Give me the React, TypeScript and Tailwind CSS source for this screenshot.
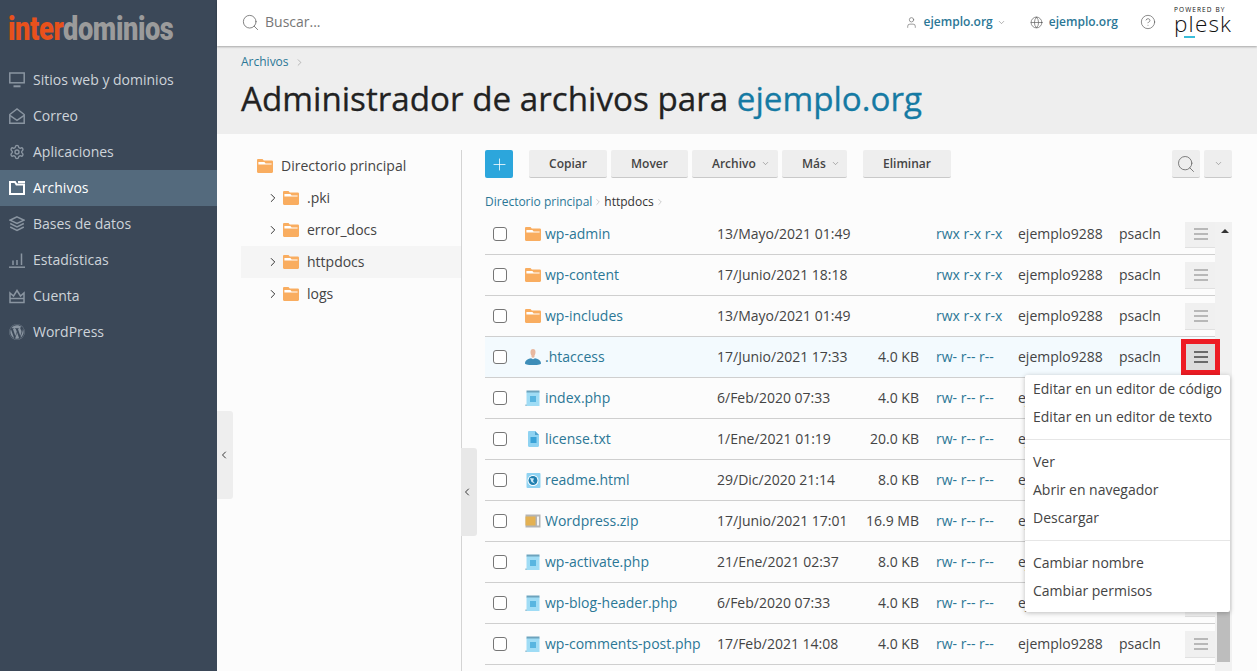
import React from "react";
import { Settings, ChevronRight, ChevronLeft, ChevronDown, Search, User, Globe, CircleHelp, Plus } from "lucide-react";
import { FaWordpress } from "react-icons/fa";

const FolderIcon = ({ className = "" }: { className?: string }) => (
  <svg viewBox="0 0 16 14" className={className}>
    <path d="M0 1.2C0 .5.5 0 1.2 0h4.3l1.3 1.4h8C15.5 1.4 16 2 16 2.6v10.2c0 .7-.5 1.2-1.2 1.2H1.2C.5 14 0 13.5 0 12.8z" fill="#f9ad60" />
    <path d="M1.4 3h6l1.2 1.4h6V5.4H1.4z" fill="#ffffff" />
  </svg>
);

const PhpIcon = () => (
  <svg viewBox="0 0 16 16" className="w-4 h-4 shrink-0">
    <rect x="1.5" y="2" width="13" height="14" fill="#9fdcf5" />
    <rect x="1.5" y="0.5" width="13" height="2" fill="#6da3bd" />
    <rect x="5" y="6" width="6" height="6" fill="#58b5e0" />
    <rect x="0.5" y="14.5" width="1" height="1.5" fill="#6da3bd" />
  </svg>
);
const TxtIcon = () => (
  <svg viewBox="0 0 16 16" className="w-4 h-4 shrink-0">
    <path d="M3 1.2C3 .5 3.5 0 4.2 0H10l4 4v10.8c0 .7-.5 1.2-1.2 1.2H4.2C3.5 16 3 15.500 3 14.800z" fill="#8fd3f2" />
    <path d="M10 0l4 4h-4z" fill="#4fa3cf" />
    <rect x="5.500" y="6" width="6" height="6" fill="#3aa3d8" />
  </svg>
);
const HtmlIcon = () => (
  <svg viewBox="0 0 16 16" className="w-4 h-4 shrink-0">
    <rect x="1.500" y="1" width="14" height="15" rx="1" fill="#8fd3f2" />
    <circle cx="8" cy="8.500" r="5.500" fill="#fff" />
    <circle cx="8" cy="8.500" r="4.500" fill="#1f7fb0" />
    <path d="M5 6l4 .5-1 2.500 2 2.500-3.500-1.500z" fill="#cfeaf7" />
  </svg>
);
const ZipIcon = () => (
  <svg viewBox="0 0 16 16" className="w-4 h-4 shrink-0">
    <rect x="0.500" y="1.500" width="15" height="13" fill="#b5b5b5" />
    <rect x="0.500" y="3.500" width="10" height="9" fill="#e4b152" />
    <rect x="12" y="3.500" width="2" height="9" fill="#f4f4f4" />
  </svg>
);
const UserFileIcon = () => (
  <svg viewBox="0 0 16 16" className="w-4 h-4 shrink-0">
    <path d="M5.500 3a2.500 3 0 0 1 5 0c0 1.700-.6 3-1 3.600V8l-1.500 1-1.500-1V6.600C6 6 5.500 4.700 5.500 3z" fill="#e8b8a0" />
    <path d="M0 14.500C0 11 3.500 9.800 6 9.300l2 .9 2-.9c2.500.5 6 1.700 6 5.200 0 .9-2 1.500-8 1.500s-8-.6-8-1.500z" fill="#3d8db8" />
  </svg>
);

const NavSvg = ({ children }: { children: React.ReactNode }) => (
  <svg viewBox="0 0 16 16" className="w-4 h-4" fill="none" stroke="#8a95a1" strokeWidth="1.500">
    {children}
  </svg>
);
const ArchivosIcon = () => (
  <svg viewBox="0 0 16 14" className="w-4 h-[14px]" fill="none" stroke="#fff" strokeWidth="2">
    <path d="M1 1h5l1.500 2.500H15V13H1z" />
    <path d="M9 1h7" />
  </svg>
);

const nav: [string, React.ReactNode][] = [
  ["Sitios web y dominios", <NavSvg><rect x="0.800" y="1" width="14.400" height="9.800" /><path d="M4.500 14.300h7" strokeWidth="2" /></NavSvg>],
  ["Correo", <NavSvg><path d="M.8 6.500L8 1l7.200 5.500v8.700H.8z" /><path d="M.8 7.300L8 12.300l7.200-5" /></NavSvg>],
  ["Aplicaciones", <Settings size={16} strokeWidth={2.1} color="#8a95a1" />],
  ["Archivos", <ArchivosIcon />],
  ["Bases de datos", <NavSvg><path d="M8 .9l7 3.300-7 3.300-7-3.300z" /><path d="M1.200 7.500L8 10.800l6.800-3.300" /><path d="M1.200 11L8 14.500l6.800-3.500" /></NavSvg>],
  ["Estadísticas", <NavSvg><path d="M0 15.200h16" /><path d="M4 13V8.500M8 13V8M12.500 13V1.500" /></NavSvg>],
  ["Cuenta", <NavSvg><path d="M1 5l3.500 3L8 2.500 11.500 8 15 5v9.500H1z" /><path d="M1 10.500h14" /></NavSvg>],
  ["WordPress", <FaWordpress size={16} color="#8a95a1" />],
];

type Row = { n: string; d: string; s: string; p: string; i: React.ReactNode };
const folder = <FolderIcon className="w-4 h-[14px] shrink-0" />;
const rows: Row[] = [
  { n: "wp-admin", d: "13/Mayo/2021 01:49", s: "", p: "rwx r-x r-x", i: folder },
  { n: "wp-content", d: "17/Junio/2021 18:18", s: "", p: "rwx r-x r-x", i: folder },
  { n: "wp-includes", d: "13/Mayo/2021 01:49", s: "", p: "rwx r-x r-x", i: folder },
  { n: ".htaccess", d: "17/Junio/2021 17:33", s: "4.0 KB", p: "rw- r-- r--", i: <UserFileIcon /> },
  { n: "index.php", d: "6/Feb/2020 07:33", s: "4.0 KB", p: "rw- r-- r--", i: <PhpIcon /> },
  { n: "license.txt", d: "1/Ene/2021 01:19", s: "20.0 KB", p: "rw- r-- r--", i: <TxtIcon /> },
  { n: "readme.html", d: "29/Dic/2020 21:14", s: "8.0 KB", p: "rw- r-- r--", i: <HtmlIcon /> },
  { n: "Wordpress.zip", d: "17/Junio/2021 17:01", s: "16.9 MB", p: "rw- r-- r--", i: <ZipIcon /> },
  { n: "wp-activate.php", d: "21/Ene/2021 02:37", s: "8.0 KB", p: "rw- r-- r--", i: <PhpIcon /> },
  { n: "wp-blog-header.php", d: "6/Feb/2020 07:33", s: "4.0 KB", p: "rw- r-- r--", i: <PhpIcon /> },
  { n: "wp-comments-post.php", d: "17/Feb/2021 14:08", s: "4.0 KB", p: "rw- r-- r--", i: <PhpIcon /> },
];

const ToolBtn = ({ w, label, caret }: { w: string; label: string; caret?: boolean }) => (
  <button className={`${w} h-7 bg-[#eeeeee] border-b border-[#c9c9c9] rounded-[2px] text-[12px] font-semibold text-[#444] flex items-center ${caret ? "justify-start pl-5 gap-[5px]" : "justify-center"}`}>
    {label}
    {caret && <ChevronDown size={9} strokeWidth={1.5} color="#777" />}
  </button>
);

const Burger = ({ active }: { active?: boolean }) => (
  <div className={`ml-px flex flex-col gap-[3px] w-[14px] ${active ? "text-[#6a6a6a]" : "text-[#b8b8b8]"}`}>
    <span className="h-[2px] bg-current" />
    <span className="h-[2px] bg-current" />
    <span className="h-[2px] bg-current" />
  </div>
);

export default function App() {
  return (
    <div className="relative w-[1257px] h-[671px] overflow-hidden flex font-['Open_Sans',sans-serif] text-[14px] text-[#444]">
      <aside className="w-[217px] shrink-0 bg-[#3b4858]">
        <div className="h-[62px] pl-[8px] pt-[8px]">
          <div className="w-[165px] origin-left scale-x-[0.8] whitespace-nowrap font-['Roboto',sans-serif] font-black text-[34px] leading-[40px] tracking-[-0.5px]">
            <span className="text-[#e8511c]">inter</span>
            <span className="text-[#9b9b9b]">dominios</span>
          </div>
        </div>
        {nav.map(([t, ic]) => (
          <div key={t} className={`h-9 flex items-center pl-[9px] ${t === "Archivos" ? "bg-[#546a7d] text-white" : "text-[#ced4da]"}`}>
            <span className="w-6 flex items-center shrink-0">{ic}</span>
            <span className="pb-[2px]">{t}</span>
          </div>
        ))}
      </aside>

      <div className="flex-1 min-w-0 flex flex-col">
        <header className="relative z-10 h-[46px] shrink-0 bg-white shadow-[0_1px_2px_rgba(0,0,0,0.3)] flex items-center pl-6 pr-[25px] pb-[2px]">
          <Search size={19} strokeWidth={1} color="#666" />
          <span className="ml-[5px] text-[#777] pb-[1px]">Buscar...</span>
          <div className="ml-auto flex items-center text-[12px] font-semibold text-[#2b7796]">
            <User size={13} strokeWidth={1.2} color="#666" />
            <span className="ml-[6px]">ejemplo.org</span>
            <ChevronDown size={9} strokeWidth={1.5} color="#777" className="ml-[4px]" />
            <Globe size={13} strokeWidth={1.2} color="#555" className="ml-[24px]" />
            <span className="ml-[6px]">ejemplo.org</span>
            <CircleHelp size={16} strokeWidth={1} color="#555" className="ml-[22px]" />
            <div className="ml-[18px] w-[58px] h-[38px] pt-[3px] flex flex-col items-start text-[#111] font-light">
              <span className="text-[6.500px] leading-[7px] font-normal tracking-[1.100px] whitespace-nowrap">POWERED BY</span>
              <span className="relative text-[22.500px] leading-[22px] tracking-[1.200px]">
                plesk
                <span className="absolute left-[10px] bottom-[-3px] w-[11px] h-[2px] bg-[#3bbcd8]" />
              </span>
            </div>
          </div>
        </header>

        <section className="h-[88px] shrink-0 bg-[#eeeeee] pl-6 pt-[9px]">
          <div className="flex items-center gap-[5px] text-[12px] leading-[14px] text-[#2b7796]">
            Archivos <ChevronRight size={11} strokeWidth={1} color="#777" />
          </div>
          <h1 className="mt-[8px] text-[33.200px] leading-[44px] font-normal [-webkit-text-stroke:0.3px] text-[#222] whitespace-nowrap">
            Administrador de archivos para <span className="text-[#157aa3]">ejemplo.org</span>
          </h1>
        </section>

        <main className="flex-1 min-h-0 flex bg-[#fcfcfc] pl-6 pr-[25px] pt-4">
          <div className="w-[221px] shrink-0 border-r border-[#d4d4d4]">
            <div className="h-8 flex items-center pl-4 gap-2">
              <FolderIcon className="w-4 h-[14px]" />
              <span className="pb-[2px]">Directorio principal</span>
            </div>
            {[".pki", "error_docs", "httpdocs", "logs"].map((t) => (
              <div key={t} className={`h-8 flex items-center pl-[25px] ${t === "httpdocs" ? "bg-[#f5f5f5]" : ""}`}>
                <ChevronRight size={14} strokeWidth={1.7} color="#333" className="shrink-0" />
                <FolderIcon className="w-4 h-[14px] ml-[3px] mr-2 shrink-0" />
                <span className="pb-[2px]">{t}</span>
              </div>
            ))}
          </div>

          <div className="flex-1 min-w-0 pl-[23px] flex flex-col">
            <div className="h-7 shrink-0 flex items-center">
              <button className="w-7 h-7 bg-[#2ca6dc] rounded-[2px] flex items-center justify-center">
                <Plus size={19} strokeWidth={1} color="#fff" />
              </button>
              <div className="ml-4 flex gap-1">
                <ToolBtn w="w-[78px]" label="Copiar" />
                <ToolBtn w="w-[77px]" label="Mover" />
                <ToolBtn w="w-[86px]" label="Archivo" caret />
                <ToolBtn w="w-[65px]" label="Más" caret />
              </div>
              <div className="ml-4">
                <ToolBtn w="w-[88px]" label="Eliminar" />
              </div>
              <button className="ml-auto w-7 h-7 bg-[#eeeeee] border-b border-[#c9c9c9] rounded-[2px] flex items-center justify-center">
                <Search size={20} strokeWidth={1} color="#666" />
              </button>
              <button className="ml-1 w-7 h-7 bg-[#eeeeee] border-b border-[#c9c9c9] rounded-[2px] flex items-center justify-center">
                <ChevronDown size={9} strokeWidth={1.5} color="#777" />
              </button>
            </div>

            <div className="h-[44px] shrink-0 flex items-center text-[12px] pt-[3px]">
              <span className="text-[#2b7796]">Directorio principal</span>
              <ChevronRight size={10} strokeWidth={1} color="#888" className="mx-[1px]" />
              <span className="text-[#333]">httpdocs</span>
              <ChevronRight size={10} strokeWidth={1} color="#888" className="ml-[1px]" />
            </div>

            <div className="flex-1 min-h-0 flex">
              <div className="w-[730px] overflow-hidden">
                <div className="-mt-2">
                  {rows.map((r) => {
                    const act = r.n === ".htaccess";
                    return (
                      <div key={r.n} className={`relative h-[41px] border-b border-[#cfcfcf] flex items-center ${act ? "bg-[#f3fafe]" : ""}`}>
                        <div className="w-10 pl-2 shrink-0">
                          <div className="w-[14px] h-[14px] bg-white border border-[#767676] rounded-[3px]" />
                        </div>
                        <div className="w-5 shrink-0">{r.i}</div>
                        <div className="w-[172px] pb-[2px] shrink-0 text-[#2b7796] whitespace-nowrap">{r.n}</div>
                        <div className="w-[122px] pb-[2px] shrink-0 whitespace-nowrap">{r.d}</div>
                        <div className="w-20 pb-[2px] shrink-0 text-right whitespace-nowrap">{r.s}</div>
                        <div className="w-[99px] pb-[2px] shrink-0 pl-[17px] text-[#2b7796] whitespace-nowrap">{r.p}</div>
                        <div className="w-[101px] pb-[2px] shrink-0">ejemplo9288</div>
                        <div className="w-[66px] pb-[2px] shrink-0">psacln</div>
                        <div className={`w-[30px] h-[27px] shrink-0 border-b flex items-center justify-center ${act ? "bg-[#dcdcdc] border-[#cccccc]" : "bg-[#f0f0f0] border-[#e0e0e0]"}`}>
                          <Burger active={act} />
                        </div>
                      </div>
                    );
                  })}
                </div>
              </div>
              <div className="w-[17px] shrink-0 bg-[#f1f1f1] pl-[2px]">
                <div className="h-[18px] flex items-start pt-[7px] pl-[4px]">
                  <div className="w-0 h-0 border-l-[4px] border-r-[4px] border-b-[4px] border-l-transparent border-r-transparent border-b-[#333]" />
                </div>
                <div className="mt-[162px] w-[13px] h-[260px] bg-[#bdbdbd]" />
              </div>
            </div>
          </div>
        </main>
      </div>

      <div className="absolute left-[217px] top-[411px] w-4 h-[88px] bg-[#eeeeee] rounded-r-[3px] flex items-center pl-px">
        <ChevronLeft size={12} strokeWidth={1.8} color="#222" />
      </div>
      <div className="absolute left-[461px] top-[448px] w-4 h-[88px] bg-[#e8e8e8] rounded-r-[3px] flex items-center">
        <ChevronLeft size={12} strokeWidth={1.8} color="#222" />
      </div>

      <div className="absolute left-[1181px] top-[339px] w-[39px] h-[36px] border-[5px] border-[#ed1c24]" />

      <div className="absolute left-[1025px] top-[375px] w-[205px] h-[237px] bg-white shadow-[0_1px_5px_rgba(0,0,0,0.25)] rounded-[2px] text-[#444]">
        {[["Editar en un editor de código", "Editar en un editor de texto"], ["Ver", "Abrir en navegador", "Descargar"], ["Cambiar nombre", "Cambiar permisos"]].map((g, i) => (
          <div key={i} className={i > 0 ? "border-t border-[#e6e6e6] py-2" : "pb-2"}>
            {g.map((t) => (
              <div key={t} className="h-7 pb-[2px] flex items-center pl-2 whitespace-nowrap">{t}</div>
            ))}
          </div>
        ))}
      </div>
    </div>
  );
}
